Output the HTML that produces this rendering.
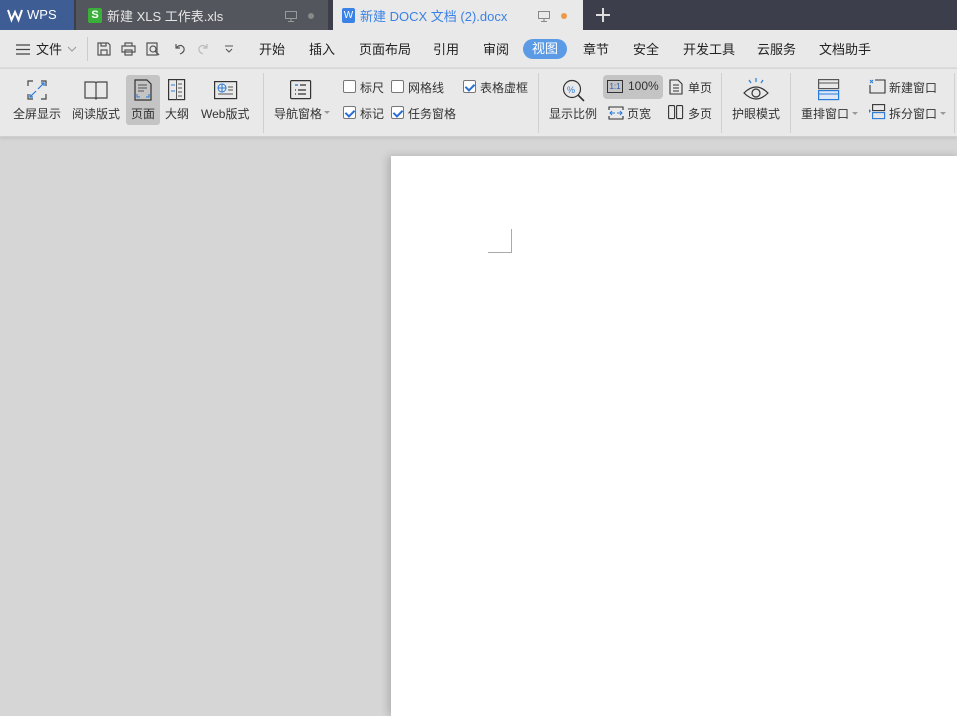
<!DOCTYPE html>
<html><head><meta charset="utf-8"><style>
*{margin:0;padding:0;box-sizing:border-box}
body{width:957px;height:703px;overflow:hidden;position:relative;background:#d6d6d6;font-family:"Liberation Sans","Noto Sans CJK SC",sans-serif;font-size:12px;color:#333}
.a{position:absolute;white-space:nowrap}
svg{position:absolute;overflow:visible}
.cb{position:absolute;width:13px;height:13px;border:1px solid #777;background:#fff;border-radius:2px}
.cb.on::after{content:"";position:absolute;left:3px;top:1px;width:4px;height:7px;border:solid #2a6fd6;border-width:0 2px 2px 0;transform:rotate(45deg)}
.sep{position:absolute;width:1px;background:#d0d0d0;top:73px;height:60px}
.m{top:39px;font-size:13px;color:#222}
</style></head><body>
<div class="a" style="left:0;top:0;width:957px;height:30px;background:#3c3f4b"></div>
<div class="a" style="left:0;top:0;width:74px;height:30px;background:#3e5d94"></div>
<svg style="left:7px;top:9px" width="16" height="12"><path d="M1 1 L4.5 11 L8 3 L11.5 11 L15 1" fill="none" stroke="#fff" stroke-width="2"/></svg>
<div class="a" style="left:27px;top:7px;color:#fff;font-size:13px">WPS</div>
<div class="a" style="left:76px;top:0;width:252px;height:30px;background:#54565e"></div>
<div class="a" style="left:88px;top:8px;width:14px;height:15px;background:#3ab03a;border-radius:2px;color:#fff;font-size:11px;text-align:center;line-height:15px;font-weight:bold">S</div>
<div class="a" style="left:107px;top:6px;color:#e6e6e6;font-size:13px">新建 XLS 工作表.xls</div>
<svg style="left:285px;top:11px" width="12" height="11"><rect x="0.5" y="0.5" width="11" height="7" fill="none" stroke="#999"/><path d="M6 8v2M3 10.5h6" stroke="#999"/></svg>
<div class="a" style="left:308px;top:13px;width:6px;height:6px;border-radius:3px;background:#888"></div>
<div class="a" style="left:333px;top:0;width:250px;height:30px;background:#e9e9e9"></div>
<div class="a" style="left:342px;top:8px;width:13px;height:15px;background:#3b82e6;border-radius:2px;color:#fff;font-size:10px;text-align:center;line-height:15px">W</div>
<div class="a" style="left:360px;top:6px;color:#3b82e6;font-size:13px">新建 DOCX 文档 (2).docx</div>
<svg style="left:538px;top:11px" width="12" height="11"><rect x="0.5" y="0.5" width="11" height="7" fill="none" stroke="#888"/><path d="M6 8v2M3 10.5h6" stroke="#888"/></svg>
<div class="a" style="left:561px;top:13px;width:6px;height:6px;border-radius:3px;background:#ec9a45"></div>
<svg style="left:596px;top:8px" width="14" height="14"><path d="M7 0v14M0 7h14" stroke="#ddd" stroke-width="2"/></svg>
<div class="a" style="left:0;top:30px;width:957px;height:38px;background:#e9e9e9;border-bottom:1px solid #dcdcdc"></div>
<svg style="left:16px;top:44px" width="14" height="11"><path d="M0 1h14M0 5.5h14M0 10h14" stroke="#444" stroke-width="1.3"/></svg>
<div class="a m" style="left:36px">文件</div>
<svg style="left:67px;top:46px" width="10" height="6"><path d="M1 1l4 4 4-4" fill="none" stroke="#999"/></svg>
<div class="a" style="left:87px;top:37px;width:1px;height:24px;background:#ccc"></div>
<svg style="left:97px;top:42px" width="14" height="14"><path d="M1 1h10l2 2v10H1z M4 13v-5h6v5 M4 1v3h5V1" fill="none" stroke="#555" stroke-width="1.2"/></svg>
<svg style="left:121px;top:42px" width="15" height="14"><path d="M4 4V1h7v3 M1 4h13v6H1z M4 8h7v5H4z" fill="none" stroke="#555" stroke-width="1.2"/></svg>
<svg style="left:146px;top:42px" width="15" height="15"><path d="M1 1h10v12H1z" fill="none" stroke="#555" stroke-width="1.2"/><circle cx="7" cy="7" r="3" fill="#e9e9e9" stroke="#555" stroke-width="1.2"/><path d="M9 9l4 4" stroke="#555" stroke-width="1.4"/></svg>
<svg style="left:173px;top:43px" width="13" height="12"><path d="M3 5 Q8 0 11 5 Q12 9 7 11 M3 1v4h4" fill="none" stroke="#555" stroke-width="1.2"/></svg>
<svg style="left:197px;top:43px" width="13" height="12"><path d="M10 5 Q5 0 2 5 Q1 9 6 11 M10 1v4H6" fill="none" stroke="#bbb" stroke-width="1.2"/></svg>
<svg style="left:224px;top:45px" width="10" height="9"><path d="M1 1h8 M2 4l3 3 3-3" fill="none" stroke="#555" stroke-width="1.1"/></svg>
<div class="a m" style="left:259px">开始</div>
<div class="a m" style="left:309px">插入</div>
<div class="a m" style="left:359px">页面布局</div>
<div class="a m" style="left:433px">引用</div>
<div class="a m" style="left:483px">审阅</div>
<div class="a" style="left:523px;top:39px;width:44px;height:20px;border-radius:10px;background:#5b9be6;color:#fff;font-size:13px;text-align:center;line-height:20px">视图</div>
<div class="a m" style="left:583px">章节</div>
<div class="a m" style="left:633px">安全</div>
<div class="a m" style="left:683px">开发工具</div>
<div class="a m" style="left:757px">云服务</div>
<div class="a m" style="left:819px">文档助手</div>
<div class="a" style="left:0;top:69px;width:957px;height:68px;background:#e9e9e9;border-bottom:1px solid #d0d0d0;box-shadow:0 2px 3px rgba(0,0,0,.08)"></div>
<svg style="left:27px;top:80px" width="20" height="20"><path d="M1 6V1h5 M14 1h5v5 M19 14v5h-5 M6 19H1v-5" fill="none" stroke="#444" stroke-width="1.2"/><path d="M11 9l6-6 M14 3h3v3 M9 11l-6 6 M3 14v3h3" fill="none" stroke="#2a7ad8" stroke-width="1.2"/></svg>
<div class="a" style="left:13px;top:105px">全屏显示</div>
<svg style="left:84px;top:81px" width="24" height="19"><path d="M1 1h10l1 1 1-1h10v16H13l-1 1-1-1H1z M12 2v15" fill="none" stroke="#444" stroke-width="1.2"/></svg>
<div class="a" style="left:72px;top:105px">阅读版式</div>
<div class="a" style="left:126px;top:75px;width:34px;height:50px;background:#c4c4c4;border-radius:3px"></div>
<svg style="left:134px;top:79px" width="18" height="22"><path d="M1 1h12l4 4v16H1z" fill="none" stroke="#333" stroke-width="1.2"/><path d="M4 6h9M4 9h9M4 12h6" stroke="#555"/><path d="M3 15v3h3 M15 15v3h-3" fill="none" stroke="#2a7ad8"/></svg>
<div class="a" style="left:131px;top:105px">页面</div>
<svg style="left:168px;top:79px" width="18" height="22"><rect x="0.6" y="0.6" width="16" height="20" fill="none" stroke="#333" stroke-width="1.2"/><path d="M8.5 1v20" stroke="#555"/><path d="M3 6h4M3 12h4" stroke="#2a7ad8"/><path d="M10 5h4M10 9h4M10 13h4M10 17h4" stroke="#555"/></svg>
<div class="a" style="left:165px;top:105px">大纲</div>
<svg style="left:214px;top:81px" width="24" height="19"><rect x="0.6" y="0.6" width="22" height="17" fill="none" stroke="#333" stroke-width="1.2"/><circle cx="8" cy="7" r="4" fill="none" stroke="#2a7ad8"/><path d="M4 7h8M8 3v8" stroke="#2a7ad8"/><path d="M14 6h5M14 9h5M4 13h15" stroke="#555"/></svg>
<div class="a" style="left:201px;top:105px">Web版式</div>
<div class="sep" style="left:263px"></div>
<svg style="left:290px;top:80px" width="22" height="20"><rect x="0.6" y="0.6" width="20" height="18" rx="1" fill="none" stroke="#333" stroke-width="1.2"/><path d="M5 5h3" stroke="#2a7ad8" stroke-width="1.4"/><path d="M10 5h6M8 10h8M8 14h8M5 10h1M5 14h1" stroke="#333" stroke-width="1.2"/></svg>
<div class="a" style="left:274px;top:105px">导航窗格</div>
<svg style="left:324px;top:111px" width="6" height="4"><path d="M0 0h6L3 3z" fill="#999"/></svg>
<div class="cb" style="left:343px;top:80px"></div><div class="a" style="left:360px;top:79px">标尺</div>
<div class="cb" style="left:391px;top:80px"></div><div class="a" style="left:408px;top:79px">网格线</div>
<div class="cb on" style="left:463px;top:80px"></div><div class="a" style="left:480px;top:79px">表格虚框</div>
<div class="cb on" style="left:343px;top:106px"></div><div class="a" style="left:360px;top:105px">标记</div>
<div class="cb on" style="left:391px;top:106px"></div><div class="a" style="left:408px;top:105px">任务窗格</div>
<div class="sep" style="left:538px"></div>
<svg style="left:562px;top:79px" width="24" height="24"><circle cx="10" cy="10" r="8.5" fill="none" stroke="#333" stroke-width="1.2"/><path d="M16 16l6 6" stroke="#333" stroke-width="1.6"/><text x="5" y="14" font-size="9" fill="#2a7ad8" font-family="Liberation Sans">%</text></svg>
<div class="a" style="left:549px;top:105px">显示比例</div>
<div class="a" style="left:603px;top:75px;width:60px;height:24px;background:#c4c4c4;border-radius:4px"></div>
<div class="a" style="left:607px;top:80px;width:16px;height:13px;border:1px solid #333;font-size:8px;line-height:11px;text-align:center;color:#2a5ab0">1:1</div>
<div class="a" style="left:628px;top:79px">100%</div>
<svg style="left:608px;top:106px" width="16" height="14"><path d="M1 4V1h14v3 M1 10v3h14v-3" fill="none" stroke="#333" stroke-width="1.1"/><path d="M2 7h5M14 7H9 M4 5l-2 2 2 2 M12 5l2 2-2 2" fill="none" stroke="#2a7ad8"/></svg>
<div class="a" style="left:627px;top:105px">页宽</div>
<svg style="left:669px;top:79px" width="14" height="16"><path d="M1 1h8l4 4v10H1z M4 6h6M4 9h6M4 12h6" fill="none" stroke="#333" stroke-width="1.1"/></svg>
<div class="a" style="left:688px;top:79px">单页</div>
<svg style="left:668px;top:105px" width="16" height="15"><rect x="0.6" y="0.6" width="6" height="13" rx="1" fill="none" stroke="#333" stroke-width="1.1"/><rect x="8.6" y="0.6" width="6" height="13" rx="1" fill="none" stroke="#333" stroke-width="1.1"/></svg>
<div class="a" style="left:688px;top:105px">多页</div>
<div class="sep" style="left:721px"></div>
<svg style="left:743px;top:78px" width="26" height="24"><path d="M6 2l2 3 M13 0v4 M20 2l-2 3" stroke="#2a7ad8" stroke-width="1.2"/><path d="M1 15 Q13 3 25 15 Q13 27 1 15z" fill="none" stroke="#333" stroke-width="1.2"/><circle cx="13" cy="15" r="4" fill="none" stroke="#333" stroke-width="1.2"/></svg>
<div class="a" style="left:732px;top:105px">护眼模式</div>
<div class="sep" style="left:790px"></div>
<svg style="left:818px;top:79px" width="22" height="22"><rect x="0.6" y="0.6" width="20" height="9" fill="none" stroke="#555" stroke-width="1.2"/><rect x="0.6" y="11.6" width="20" height="9" fill="#dce8f8" stroke="#2a7ad8" stroke-width="1.2"/><path d="M1 4h20" stroke="#555"/><path d="M1 15h20" stroke="#2a7ad8"/></svg>
<div class="a" style="left:801px;top:105px">重排窗口</div>
<svg style="left:852px;top:112px" width="6" height="4"><path d="M0 0h6L3 3z" fill="#999"/></svg>
<svg style="left:869px;top:79px" width="17" height="15"><path d="M6 1h10v13H1V6" fill="none" stroke="#333" stroke-width="1.1"/><path d="M1 1l3 3M4 1L1 4" stroke="#2a7ad8"/></svg>
<div class="a" style="left:889px;top:79px">新建窗口</div>
<svg style="left:869px;top:104px" width="17" height="16"><rect x="3.6" y="0.6" width="12" height="6" fill="none" stroke="#333" stroke-width="1.1"/><rect x="3.6" y="8.6" width="12" height="6" fill="none" stroke="#2a7ad8" stroke-width="1.1"/><path d="M0 5l2 2-2 2z" fill="#2a7ad8"/></svg>
<div class="a" style="left:889px;top:105px">拆分窗口</div>
<svg style="left:940px;top:112px" width="6" height="4"><path d="M0 0h6L3 3z" fill="#999"/></svg>
<div class="sep" style="left:954px"></div>
<div class="a" style="left:391px;top:156px;width:570px;height:560px;background:#fff;box-shadow:-3px 0 8px rgba(0,0,0,.18)"></div>
<div class="a" style="left:488px;top:229px;width:24px;height:24px;border-right:1px solid #aaa;border-bottom:1px solid #aaa"></div>
</body></html>
